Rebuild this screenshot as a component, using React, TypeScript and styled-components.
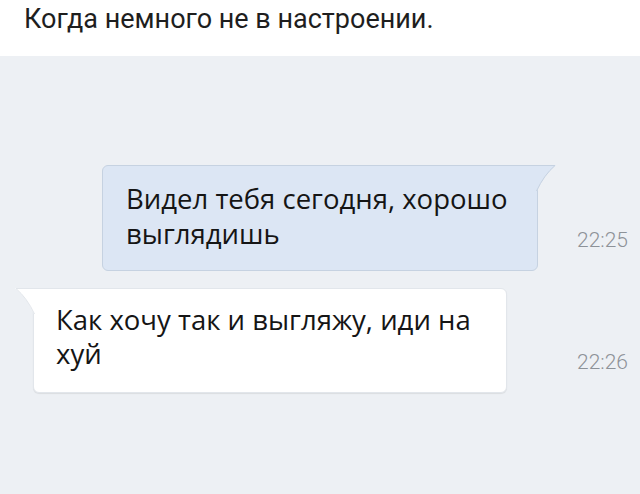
import React from "react";
import styled, { createGlobalStyle } from "styled-components";

const Global = createGlobalStyle`
  html, body { margin: 0; padding: 0; }
  body { width: 640px; height: 494px; overflow: hidden; background: #edf0f4; }
  #root { width: 640px; height: 494px; }
`;

const Page = styled.div`
  width: 640px;
  height: 494px;
  display: flex;
  flex-direction: column;
  background: #edf0f4;
`;

const Header = styled.div`
  height: 56px;
  box-sizing: border-box;
  padding: 4px 0 0 24px;
  background: #ffffff;
  font-family: Roboto, "Noto Sans", sans-serif;
  font-size: 27px;
  line-height: 30px;
  color: #1e1e1e;
`;

const Chat = styled.div`
  flex: 1;
  display: flex;
  flex-direction: column;
  gap: 17px;
  padding-top: 109px;
`;

const Row = styled.div<{ $indent: number }>`
  display: flex;
  align-items: flex-end;
  padding-left: ${(p) => p.$indent}px;
`;

const Bubble = styled.div<{ $out?: boolean; $width: number }>`
  position: relative;
  box-sizing: border-box;
  width: ${(p) => p.$width}px;
  padding: ${(p) => (p.$out ? "15px 16px 19px 23px" : "14px 16px 21px 22px")};
  background: ${(p) => (p.$out ? "#dce6f4" : "#ffffff")};
  border: 1px solid ${(p) => (p.$out ? "#c6d2e1" : "#e2e6eb")};
  border-radius: ${(p) => (p.$out ? "6px 0 6px 6px" : "0 6px 6px 6px")};
  box-shadow: ${(p) => (p.$out ? "none" : "0 1px 1px rgba(0,0,0,0.08)")};
  font-family: "Open Sans", "Noto Sans", sans-serif;
  font-size: 27.5px;
  line-height: ${(p) => (p.$out ? 35 : 34)}px;
  color: #151515;
`;

const Tail = styled.svg<{ $side: "left" | "right" }>`
  position: absolute;
  top: -1px;
  ${(p) => (p.$side === "right" ? "right: -20px;" : "left: -20px;")}
  width: 21px;
  height: 26px;
  overflow: visible;
`;

const Time = styled.div`
  margin-left: auto;
  margin-right: 12px;
  margin-bottom: 21px;
  font-family: Roboto, "Noto Sans", sans-serif;
  font-weight: 300;
  font-size: 21px;
  line-height: 20px;
  color: #8d9298;
`;

export default function App() {
  return (
    <Page>
      <Global />
      <Header>Когда немного не в настроении.</Header>
      <Chat>
        <Row $indent={102}>
          <Bubble $out $width={436}>
            Видел тебя сегодня, хорошо
            <br />
            выглядишь
            <Tail $side="right" viewBox="0 0 21 26">
              <path d="M0 0 H20 Q8 10 1 26 H0 Z" fill="#dce6f4" />
              <path d="M0 0.5 H19 Q8 10 0.5 26" fill="none" stroke="#c6d2e1" strokeWidth="1" />
            </Tail>
          </Bubble>
          <Time>22:25</Time>
        </Row>
        <Row $indent={33}>
          <Bubble $width={474}>
            Как хочу так и выгляжу, иди на
            <br />
            хуй
            <Tail $side="left" viewBox="0 0 21 26">
              <path d="M21 0 H1 Q13 10 20 26 H21 Z" fill="#ffffff" />
              <path d="M21 0.5 H2 Q13 10 20.5 26" fill="none" stroke="#e2e6eb" strokeWidth="1" />
            </Tail>
          </Bubble>
          <Time>22:26</Time>
        </Row>
      </Chat>
    </Page>
  );
}
